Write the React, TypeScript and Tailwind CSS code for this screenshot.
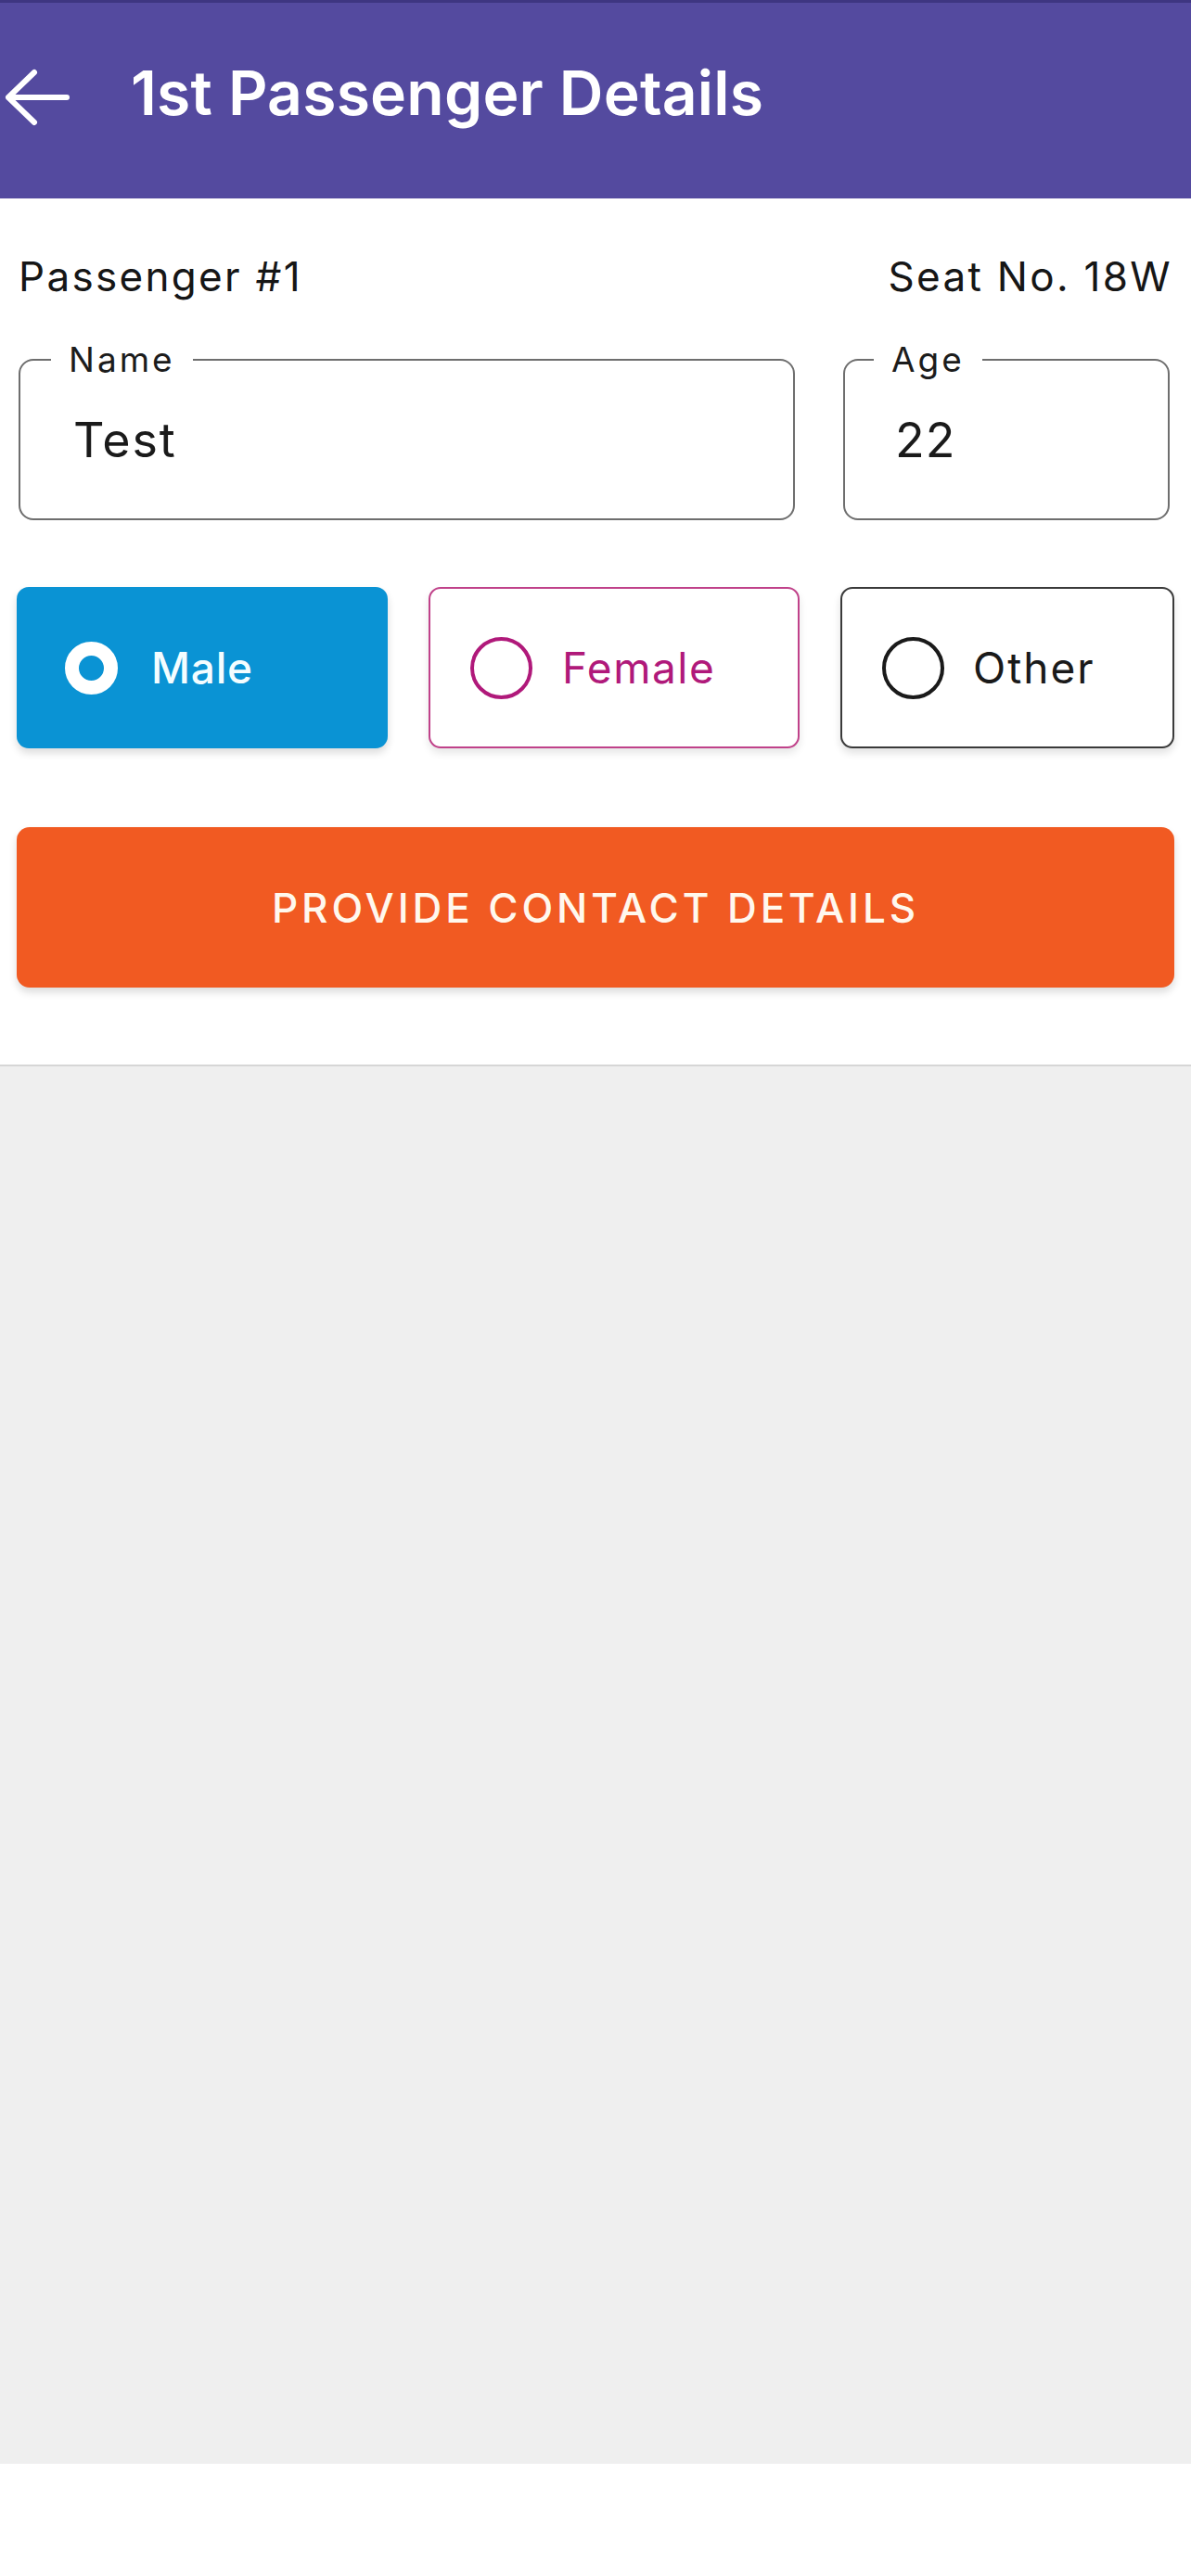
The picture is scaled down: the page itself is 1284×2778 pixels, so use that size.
import React from "react";

const font = { fontFamily: "Inter, 'Noto Sans', sans-serif" };

function Field({ label, value, widthClass, legendMl, valuePl, valueTracking }: { label: string; value: string; widthClass: string; legendMl: string; valuePl: string; valueTracking: string }) {
  return (
    <fieldset className={`${widthClass} border-2 border-[#6e6e6e] rounded-[16px]`}>
      <legend className={`${legendMl} px-[19px] text-[37px] leading-[36px] tracking-[3px] text-[#1c1c1c]`}>{label}</legend>
      <div className={`${valuePl} ${valueTracking} pt-[43px] pb-[58px] text-[52px] leading-[52px] text-[#1a1a1a]`}>{value}</div>
    </fieldset>
  );
}

export default function App() {
  return (
    <div className="w-[1284px] h-[2778px] bg-white flex flex-col" style={font}>
      <header className="h-[214px] bg-[#544a9f] border-t-[3px] border-[#3e3681] flex items-center pl-[4px]">
        <svg width="72" height="64" viewBox="0 0 72 64" className="mt-[-8px]">
          <path d="M68 32H5M33 5L5 32L33 59" fill="none" stroke="#ffffff" strokeWidth="6" strokeLinecap="round" strokeLinejoin="round" />
        </svg>
        <h1 className="ml-[65px] mt-[-18px] text-[66px] leading-[70px] font-semibold text-white tracking-[0.2px]">1st Passenger Details</h1>
      </header>

      <section className="h-[936px] bg-white border-b-2 border-[#d6d6d6] flex flex-col">
        <div className="flex justify-between pl-[20px] pr-[20px] pt-[59px] text-[44px] leading-[50px] tracking-[2.3px] text-[#161616]">
          <span>Passenger #1</span>
          <span>Seat No. 18W</span>
        </div>

        <div className="flex gap-[52px] pl-[20px] mt-[47px]">
          <Field label="Name" value="Test" widthClass="w-[837px]" legendMl="ml-[33px]" valuePl="pl-[57px]" valueTracking="tracking-[1.8px]" />
          <Field label="Age" value="22" widthClass="w-[352px]" legendMl="ml-[31px]" valuePl="pl-[54px]" valueTracking="tracking-[1px]" />
        </div>

        <div className="flex gap-[44px] px-[18px] mt-[72px] h-[174px]">
          <button className="w-[400px] h-full rounded-[13px] bg-[#0a93d4] flex items-center pl-[52px] shadow-[0_5px_8px_rgba(0,0,0,0.14)]">
            <span className="w-[57px] h-[57px] rounded-full border-[15px] border-white shrink-0" />
            <span className="ml-[36px] text-[46px] leading-[50px] font-medium tracking-[0.8px] text-[#f4fdff]">Male</span>
          </button>
          <button className="w-[400px] h-full rounded-[13px] bg-white border-2 border-[#c0428a] flex items-center pl-[43px] shadow-[0_5px_8px_rgba(0,0,0,0.10)]">
            <span className="w-[67px] h-[67px] rounded-full border-[4px] border-[#b0197a] shrink-0" />
            <span className="ml-[32px] text-[46px] leading-[50px] tracking-[1.5px] text-[#b0197a]">Female</span>
          </button>
          <button className="flex-1 h-full rounded-[13px] bg-white border-2 border-[#3a3a3a] flex items-center pl-[43px] shadow-[0_5px_8px_rgba(0,0,0,0.12)]">
            <span className="w-[67px] h-[67px] rounded-full border-[4px] border-[#1a1a1a] shrink-0" />
            <span className="ml-[31px] text-[46px] leading-[50px] tracking-[2px] text-[#1a1a1a]">Other</span>
          </button>
        </div>

        <div className="px-[18px] mt-[85px]">
          <button className="w-full h-[173px] rounded-[14px] bg-[#f15a22] flex items-center justify-center shadow-[0_5px_8px_rgba(0,0,0,0.14)]">
            <span className="text-[44px] leading-[50px] font-medium tracking-[3.9px] text-[#fff8ee]">PROVIDE CONTACT DETAILS</span>
          </button>
        </div>
      </section>

      <div className="h-[1507px] bg-[#efefef]" />
      <div className="flex-1 bg-white" />
    </div>
  );
}
